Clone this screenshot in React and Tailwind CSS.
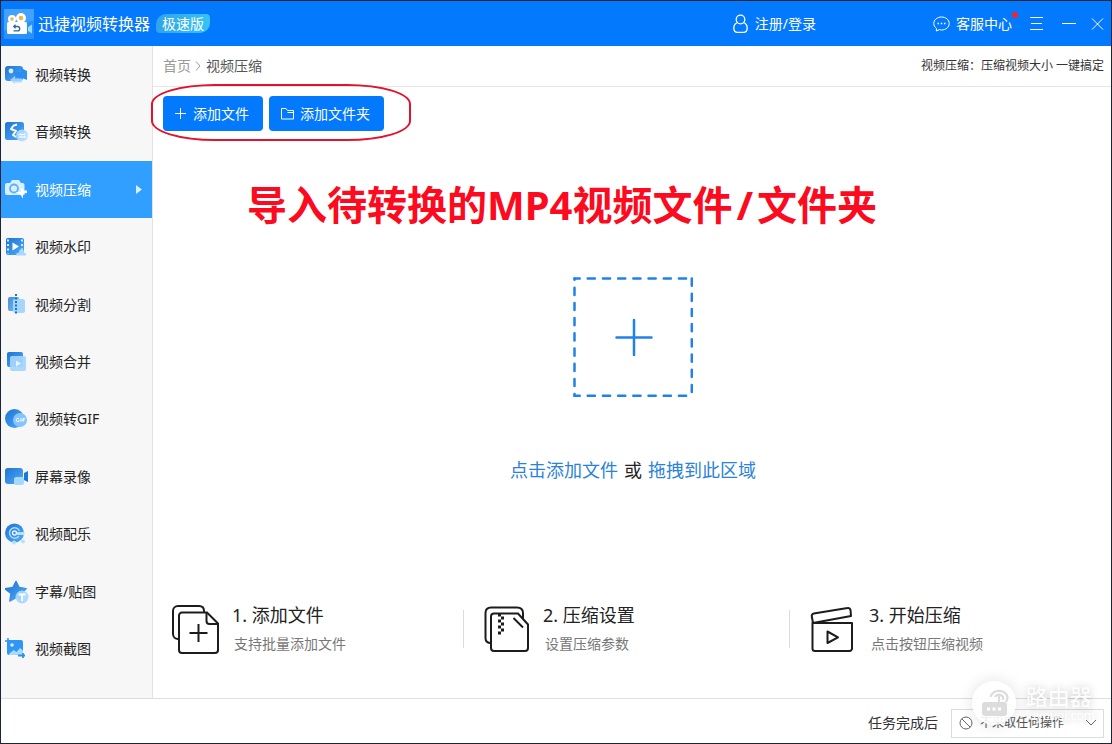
import { useState } from "react";

function MenuIcon({ name }) {
  return (
    <svg width="24" height="24" viewBox="0 0 24 24" className="shrink-0">
      {name === "convert" && (
        <>
          <rect x="0" y="3" width="18" height="15" rx="3" fill="url(#blue)" />
          <circle cx="6" cy="8" r="2.4" fill="#d6edff" />
          <path d="M9 9h7V5l6 3v9l-5-2v2l-6-3z" fill="#2b8df0" />
          <path d="M5 17l5-4v2.500h7v4h-7V21z" fill="#a8d8ff" opacity=".85" />
        </>
      )}
      {name === "audio" && (
        <>
          <rect x="0" y="2" width="19" height="18" rx="2.500" fill="url(#blue)" />
          <path
            d="M9 5l-3 4 5 2-3 4 3 2M12 4.500l-3 1"
            fill="none"
            stroke="#fff"
            strokeWidth="2"
            strokeLinejoin="round"
          />
          <circle cx="17" cy="15.500" r="6" fill="#b5dcff" opacity=".9" />
          <path d="M13.500 14.500h7M14 17h7" stroke="#f4faff" strokeWidth="1.300" />
        </>
      )}
      {name === "compress" && (
        <>
          <path
            d="M2 5h3l2-3h7l2 3h1.500a2 2 0 0 1 2 2v10H2a2 2 0 0 1-2-2V7a2 2 0 0 1 2-2z"
            fill="#d9efff"
          />
          <circle cx="9" cy="10.500" r="4" fill="#d9efff" stroke="#5cb2f8" strokeWidth="1.800" />
          <path d="M10.500 14h5.500v-3l1.500-1 1.500 2.500h3v2.500l-4 .5v5l-3-4.500z" fill="#fff" />
        </>
      )}
      {name === "watermark" && (
        <>
          <rect x="1" y="3" width="18" height="17" rx="2" fill="url(#blue)" />
          <path d="M3 4.500v14M17 4.500v14" stroke="#d6edff" strokeWidth="2" strokeDasharray="2 2.500" />
          <path d="M7.500 7.500l6.500 4-6.500 4z" fill="#fff" />
          <path d="M11 20.500c0-2 1-3 3-3 0-2 1-3.500 2.500-3.500s2.500 1.500 2.500 3.500c1.500 0 2 1 2 3z" fill="#a9d7ff" />
        </>
      )}
      {name === "split" && (
        <>
          <rect x="3" y="4" width="11" height="14" rx="2" fill="url(#blue)" opacity=".8" />
          <rect x="8" y="6" width="12" height="14" rx="2" fill="#a7d6fd" />
          <path d="M11 1v21" stroke="#1474d8" strokeWidth="2" strokeDasharray="2 1.500" />
        </>
      )}
      {name === "merge" && (
        <>
          <rect x="2" y="2" width="16" height="15" rx="2" fill="url(#blue)" />
          <rect x="5" y="6" width="16" height="15" rx="2" fill="#a5d5fe" opacity=".92" />
          <path d="M11 10.500l5 3-5 3z" fill="#e6f5ff" />
        </>
      )}
      {name === "gif" && (
        <>
          <circle cx="9.500" cy="11.500" r="9.500" fill="url(#blue)" />
          <circle cx="15" cy="13" r="7" fill="#86c5fb" />
          <path
            d="M14 11.500h-1.500a1.200 1.200 0 0 0-1.200 1.200v.6a1.200 1.200 0 0 0 1.200 1.200H14v-1.400M16 11.200v3.500M18 14.700v-3h2M18 13.200h1.500"
            fill="none"
            stroke="#fff"
          />
        </>
      )}
      {name === "record" && (
        <>
          <rect x="0" y="3" width="18" height="16" rx="3" fill="url(#blue)" />
          <path d="M19 8l4-2v11l-4-2z" fill="#1677dc" />
          <rect x="9" y="12" width="10" height="8" rx="2" fill="#a7d9ff" />
        </>
      )}
      {name === "music" && (
        <>
          <circle cx="9.500" cy="11" r="9.500" fill="url(#blue)" />
          <path
            d="M14 14a5.200 5.200 0 1 1 .5-5"
            fill="none"
            stroke="#a9d9ff"
            strokeWidth="1.500"
          />
          <circle cx="9.500" cy="11" r="2" fill="none" stroke="#e6f5ff" strokeWidth="1.500" />
          <path d="M12 11.500h7.500" stroke="#b8dffe" strokeWidth="3" />
          <circle cx="9" cy="20.500" r="2" fill="#b8dffe" />
          <circle cx="18" cy="19.500" r="2" fill="#b8dffe" />
        </>
      )}
      {name === "sticker" && (
        <>
          <path
            d="M11 1.500l3.200 6 7 1.200-5 4.800 1 7-6.200-3-6.200 3.500 1.200-7.500L0 8.700l7.800-1.200z"
            fill="url(#blue)"
            stroke="url(#blue)"
            strokeWidth="1.500"
            strokeLinejoin="round"
          />
          <circle cx="17" cy="17" r="6.500" fill="#a9d7fd" opacity=".93" />
          <path d="M13.500 14.500h7M17 14.500V21" stroke="#fff" strokeWidth="1.800" />
        </>
      )}
      {name === "capture" && (
        <>
          <path d="M0 4h3M3 1v3" stroke="#2f8ff0" strokeWidth="1.500" />
          <rect x="2" y="3" width="16" height="15" rx="2" fill="#2f96f5" />
          <circle cx="7" cy="8" r="1.800" fill="#d6edff" />
          <path d="M4 17l4.500-4 3 2 3.500-4 3 2.500v4.500H4z" fill="#a9d9ff" />
          <path d="M13 18.500h7M18 16v5" stroke="#2f8ff0" strokeWidth="1.800" />
        </>
      )}
    </svg>
  );
}

const menu = [
  { id: "convert", label: "视频转换" },
  { id: "audio", label: "音频转换" },
  { id: "compress", label: "视频压缩" },
  { id: "watermark", label: "视频水印" },
  { id: "split", label: "视频分割" },
  { id: "merge", label: "视频合并" },
  { id: "gif", label: "视频转GIF" },
  { id: "record", label: "屏幕录像" },
  { id: "music", label: "视频配乐" },
  { id: "sticker", label: "字幕/贴图" },
  { id: "capture", label: "视频截图" },
];

function Header() {
  return (
    <header className="flex h-[45px] shrink-0 items-center bg-[#0379fe] pl-[3px] pr-[7px] text-sm text-white">
      <svg width="30" height="30" viewBox="0 0 30 30">
        <rect width="30" height="30" rx="1" fill="#2b90fa" />
        <path d="M0 1a1 1 0 0 1 1-1h28a1 1 0 0 1 1 1v10L0 22z" fill="#43a0fb" />
        <circle cx="8" cy="10" r="4" fill="#fff" />
        <circle cx="17" cy="9" r="5" fill="#fff" />
        <circle cx="8" cy="10" r="1.800" fill="#f0b64a" />
        <circle cx="17" cy="9" r="2.300" fill="#f0b64a" />
        <rect x="3" y="13" width="20" height="12" rx="1.500" fill="#fff" />
        <path d="M24 18l4-2.500v9L24 22z" fill="#8fe0ff" />
        <path
          d="M10 17.500h3.500a2.200 2.200 0 0 1 0 4.400H9.500M11.500 15.800l-1.700 1.700 1.700 1.700"
          fill="none"
          stroke="#35679b"
          strokeWidth="1.300"
        />
      </svg>
      <h1 className="ml-1 text-base">迅捷视频转换器</h1>
      <span className="ml-1.5 rounded-tl-[10px] rounded-br-[10px] rounded-tr-sm rounded-bl-sm bg-linear-to-r from-[#2fa4e8] to-[#35c3f5] px-1.5 text-sm leading-[19px]">
        极速版
      </span>
      <button className="ml-auto mr-[117px] flex items-center gap-1.5">
        <svg width="17" height="20" viewBox="0 0 17 20" fill="none" stroke="#fff" strokeWidth="1.300">
          <circle cx="8.500" cy="5.500" r="4.300" />
          <path d="M5.500 8.500C3 9.500 1.800 11.500 1.800 14c0 3 1.200 4.300 3.700 4.300h6c2.500 0 3.700-1.300 3.700-4.300 0-2.500-1.200-4.500-3.700-5.500" />
        </svg>
        注册/登录
      </button>
      <button className="relative flex items-center gap-1.5">
        <svg width="17" height="16" viewBox="0 0 17 16" fill="none" stroke="#fff">
          <path d="M3.500 12.500C1.800 11.300.8 9.500.8 7.500.8 3.800 4.200 1 8.500 1s7.700 2.800 7.700 6.500S12.800 14 8.500 14c-.8 0-1.500-.1-2.200-.3L3.300 15z" />
          <path d="M4.500 7.500h1.500M7.800 7.500h1.500M11 7.500h1.500" strokeWidth="1.400" />
        </svg>
        客服中心
        <i className="absolute -right-1.5 -top-0.5 size-1.5 rounded-full bg-[#f5222d]" />
      </button>
      <button aria-label="菜单" className="ml-[18px]">
        <svg width="14" height="16" viewBox="0 0 14 16" stroke="#fff">
          <path d="M0 1.500h13M1 7.500h11M0 13.500h13" />
        </svg>
      </button>
      <button aria-label="最小化" className="ml-[18px]">
        <svg width="14" height="16" viewBox="0 0 14 16" stroke="#fff">
          <path d="M0 7.500h14" />
        </svg>
      </button>
      <button aria-label="关闭" className="ml-[15px]">
        <svg width="13" height="12" viewBox="0 0 12 12" stroke="#fff">
          <path d="M.5.5l11 11M11.500.5l-11 11" />
        </svg>
      </button>
    </header>
  );
}

function Sidebar({ selected, setSelected }) {
  return (
    <nav className="flex w-[152px] shrink-0 flex-col border-r border-[#e2e2e2] bg-[#f7f7f7] pb-5">
      {menu.map((item) => (
        <button
          key={item.id}
          onClick={() => setSelected(item.id)}
          className={`flex flex-1 items-center gap-1.5 pl-1 pr-2.5 text-sm ${
            selected === item.id ? "bg-[#309fff] text-white" : "text-[#222]"
          }`}
        >
          <MenuIcon name={item.id} />
          {item.label}
          {selected === item.id && (
            <svg width="6" height="9" viewBox="0 0 6 9" className="ml-auto">
              <path d="M0 0l6 4.500L0 9z" fill="#d9edff" />
            </svg>
          )}
        </button>
      ))}
    </nav>
  );
}

function Step({ title, text, children }) {
  return (
    <li className="flex items-center">
      {children}
      <div>
        <h3 className="text-lg leading-[30px] text-[#222]">{title}</h3>
        <p className="pl-0.5 text-sm leading-[28px] text-[#777]">{text}</p>
      </div>
    </li>
  );
}

function Steps() {
  return (
    <ol className="mt-auto mb-10 grid grid-cols-[310fr_326fr_322fr]">
      <Step title="1. 添加文件" text="支持批量添加文件">
        <svg
          width="48"
          height="50"
          viewBox="0 0 48 50"
          fill="none"
          stroke="#1c1c1c"
          strokeWidth="2"
          className="ml-[18px] mr-[13px]"
        >
          <path d="M8 35H7a5 5 0 0 1-5-5V7a5 5 0 0 1 5-5h21c3 0 5 2 5 5v1" />
          <path d="M11 8.500h25L47 19.500V46a3 3 0 0 1-3 3H11a3 3 0 0 1-3-3V11.500a3 3 0 0 1 3-3z" />
          <path d="M35.500 9v8a3 3 0 0 0 3 3H47M27.500 20v18M18.500 29h18" />
        </svg>
      </Step>
      <Step title="2. 压缩设置" text="设置压缩参数">
        <span className="h-[38px] w-px bg-[#dcdcdc]" />
        <svg
          width="46"
          height="46"
          viewBox="0 0 46 46"
          fill="none"
          stroke="#1c1c1c"
          strokeWidth="2"
          className="ml-5 mr-[13px]"
        >
          <path d="M7 37C3.500 37 1.500 35 1.500 32V7c0-3.500 2-5.500 5.500-5.500h26c3.500 0 6 2 6 5.500v6" />
          <path d="M10 7.500h24l10 11V42a3 3 0 0 1-3 3H10a3 3 0 0 1-3-3V10.500a3 3 0 0 1 3-3zM29.500 12l9.500 9.500" />
          <path d="M15.500 7.500v21" strokeWidth="3" strokeDasharray="3 3" />
          <path d="M18.500 10.500v18" strokeWidth="3" strokeDasharray="3 3" />
        </svg>
      </Step>
      <Step title="3. 开始压缩" text="点击按钮压缩视频">
        <span className="h-[38px] w-px bg-[#dcdcdc]" />
        <svg
          width="44"
          height="46"
          viewBox="0 0 44 46"
          fill="none"
          stroke="#1c1c1c"
          strokeWidth="2"
          strokeLinejoin="round"
          className="ml-5 mr-[15px]"
        >
          <path d="M3 17L1.800 10.500a2.500 2.500 0 0 1 2-3L37.500 2a2.500 2.500 0 0 1 3 2l.5 6z" />
          <path d="M2.500 17H42v25.500a2.500 2.500 0 0 1-2.500 2.500H5A2.500 2.500 0 0 1 2.500 42.500zM17.500 25.500v11.500L28 31.300z" />
        </svg>
      </Step>
    </ol>
  );
}

function Main() {
  return (
    <main className="flex min-w-0 flex-1 flex-col bg-white">
      <div className="flex h-[41px] items-center justify-between border-b border-[#e6e6e6] pl-2.5 pr-[7px]">
        <div className="flex items-center gap-1 text-sm text-[#555]">
          <a href="#home" className="text-[#999]">
            首页
          </a>
          <svg width="7" height="10" viewBox="0 0 7 10" fill="none" stroke="#999">
            <path d="M1 .5L5 5 1 9.500" />
          </svg>
          视频压缩
        </div>
        <p className="text-xs text-[#333]">视频压缩：压缩视频大小 一键搞定</p>
      </div>

      <div className="relative flex gap-1.5 px-2.5 pt-[9px] text-sm text-white">
        <button className="flex h-[35px] w-[100px] items-center justify-center gap-1.5 rounded bg-[#0379fe] pr-0.5">
          <svg width="12" height="12" viewBox="0 0 12 12" stroke="#fff">
            <path d="M0 5.500h11M5.500 0v11" />
          </svg>
          添加文件
        </button>
        <button className="flex h-[35px] w-[115px] items-center justify-center gap-1.5 rounded bg-[#0379fe] pr-0.5">
          <svg width="13" height="12" viewBox="0 0 13 12" fill="none" stroke="#fff">
            <path d="M.5 11V.5h4.500l1.500 2h6V11zM6.500 4.500h6" />
          </svg>
          添加文件夹
        </button>
        <div className="pointer-events-none absolute -left-0.5 -top-[3px] h-[57px] w-[260px] rounded-[64px/20px] border-2 border-[#e3122c]" />
      </div>

      <p className="mt-[50px] pl-[94px] text-[40px] font-bold leading-[48px] whitespace-nowrap text-[#fb0a20]">
        导入待转换的MP4视频文件<span className="mx-1">/</span>文件夹
      </p>

      <button aria-label="添加文件" className="mt-12 ml-0.5 self-center">
        <svg
          width="120"
          height="120"
          viewBox="0 0 120 120"
          stroke="#1f82e8"
          strokeWidth="2.500"
          strokeLinecap="round"
        >
          <path d="M1.500 1.500H119M1.500 118.800H119" strokeDasharray="7.200 8" strokeDashoffset="2" />
          <path d="M1.500 1.500V119" strokeDasharray="7.200 8" strokeDashoffset="6" />
          <path d="M118.800 1.500V119" strokeDasharray="7.200 8" />
          <path d="M43.500 60.500h35M61 43v35" />
        </svg>
      </button>
      <p className="mt-[59px] ml-0.5 flex gap-1.5 self-center text-lg leading-[28px] text-[#222]">
        <a href="#add" className="text-[#2b82d9]">
          点击添加文件
        </a>
        <span>或</span>
        <span className="text-[#2b82d9]">拖拽到此区域</span>
      </p>

      <Steps />
    </main>
  );
}

function Watermark() {
  return (
    <div className="pointer-events-none absolute right-4 bottom-[18px] flex items-center gap-2.5 text-white">
      <svg
        width="44"
        height="44"
        viewBox="0 0 44 44"
        fill="none"
        className="rounded-full bg-white/90 shadow-[0_0_16px_rgba(0,0,0,0.12)]"
      >
        <rect x="10" y="21" width="25" height="14" rx="3" fill="#dcdcdc" />
        <path
          d="M27 21v-6M23 16a4.500 4.500 0 0 1 8 0v3M18.500 16a9 9 0 0 1 17 0c0 2-.5 3.500-1.500 5"
          stroke="#dcdcdc"
          strokeWidth="2.200"
        />
        <path d="M15 28h3M20.500 28h3M26 28h3" stroke="#fff" strokeWidth="3" />
      </svg>
      <div className="[text-shadow:0_0_8px_rgba(0,0,0,0.25)]">
        <div className="text-[22px] leading-[26px]">路由器</div>
        <div className="text-xs leading-[14px]">luyouqi.com</div>
      </div>
    </div>
  );
}

function Footer() {
  return (
    <footer className="relative flex h-[45px] shrink-0 items-center justify-end gap-[13px] border-t border-[#dedede] bg-white pt-1 pr-[7px]">
      <label htmlFor="after" className="text-sm text-[#333]">
        任务完成后
      </label>
      <div className="relative flex h-[29px] w-[153px] items-center border border-[#dcdcdc]">
        <svg
          width="14"
          height="14"
          viewBox="0 0 14 14"
          fill="none"
          stroke="#666"
          className="absolute left-[7px]"
        >
          <circle cx="7" cy="7" r="6" />
          <path d="M2.800 2.800l8.400 8.400" />
        </svg>
        <select id="after" className="h-full w-full appearance-none bg-transparent pl-7 text-xs text-[#555]">
          <option>不采取任何操作</option>
        </select>
        <svg
          width="12"
          height="8"
          viewBox="0 0 12 8"
          fill="none"
          stroke="#666"
          className="pointer-events-none absolute right-1.5"
        >
          <path d="M1 1l5 5 5-5" />
        </svg>
      </div>
      <Watermark />
    </footer>
  );
}

export default function App() {
  const [selected, setSelected] = useState("compress");

  return (
    <div className="flex min-h-screen flex-col border border-[#1d2433] font-['Noto_Sans','Noto_Sans_CJK_SC',sans-serif]">
      <svg width="0" height="0" className="absolute">
        <linearGradient id="blue" x1="0" y1="0" x2="1" y2="1">
          <stop offset="0" stopColor="#1f73cf" />
          <stop offset="1" stopColor="#4eacff" />
        </linearGradient>
      </svg>
      <Header />
      <div className="flex flex-1">
        <Sidebar selected={selected} setSelected={setSelected} />
        <Main />
      </div>
      <Footer />
    </div>
  );
}
